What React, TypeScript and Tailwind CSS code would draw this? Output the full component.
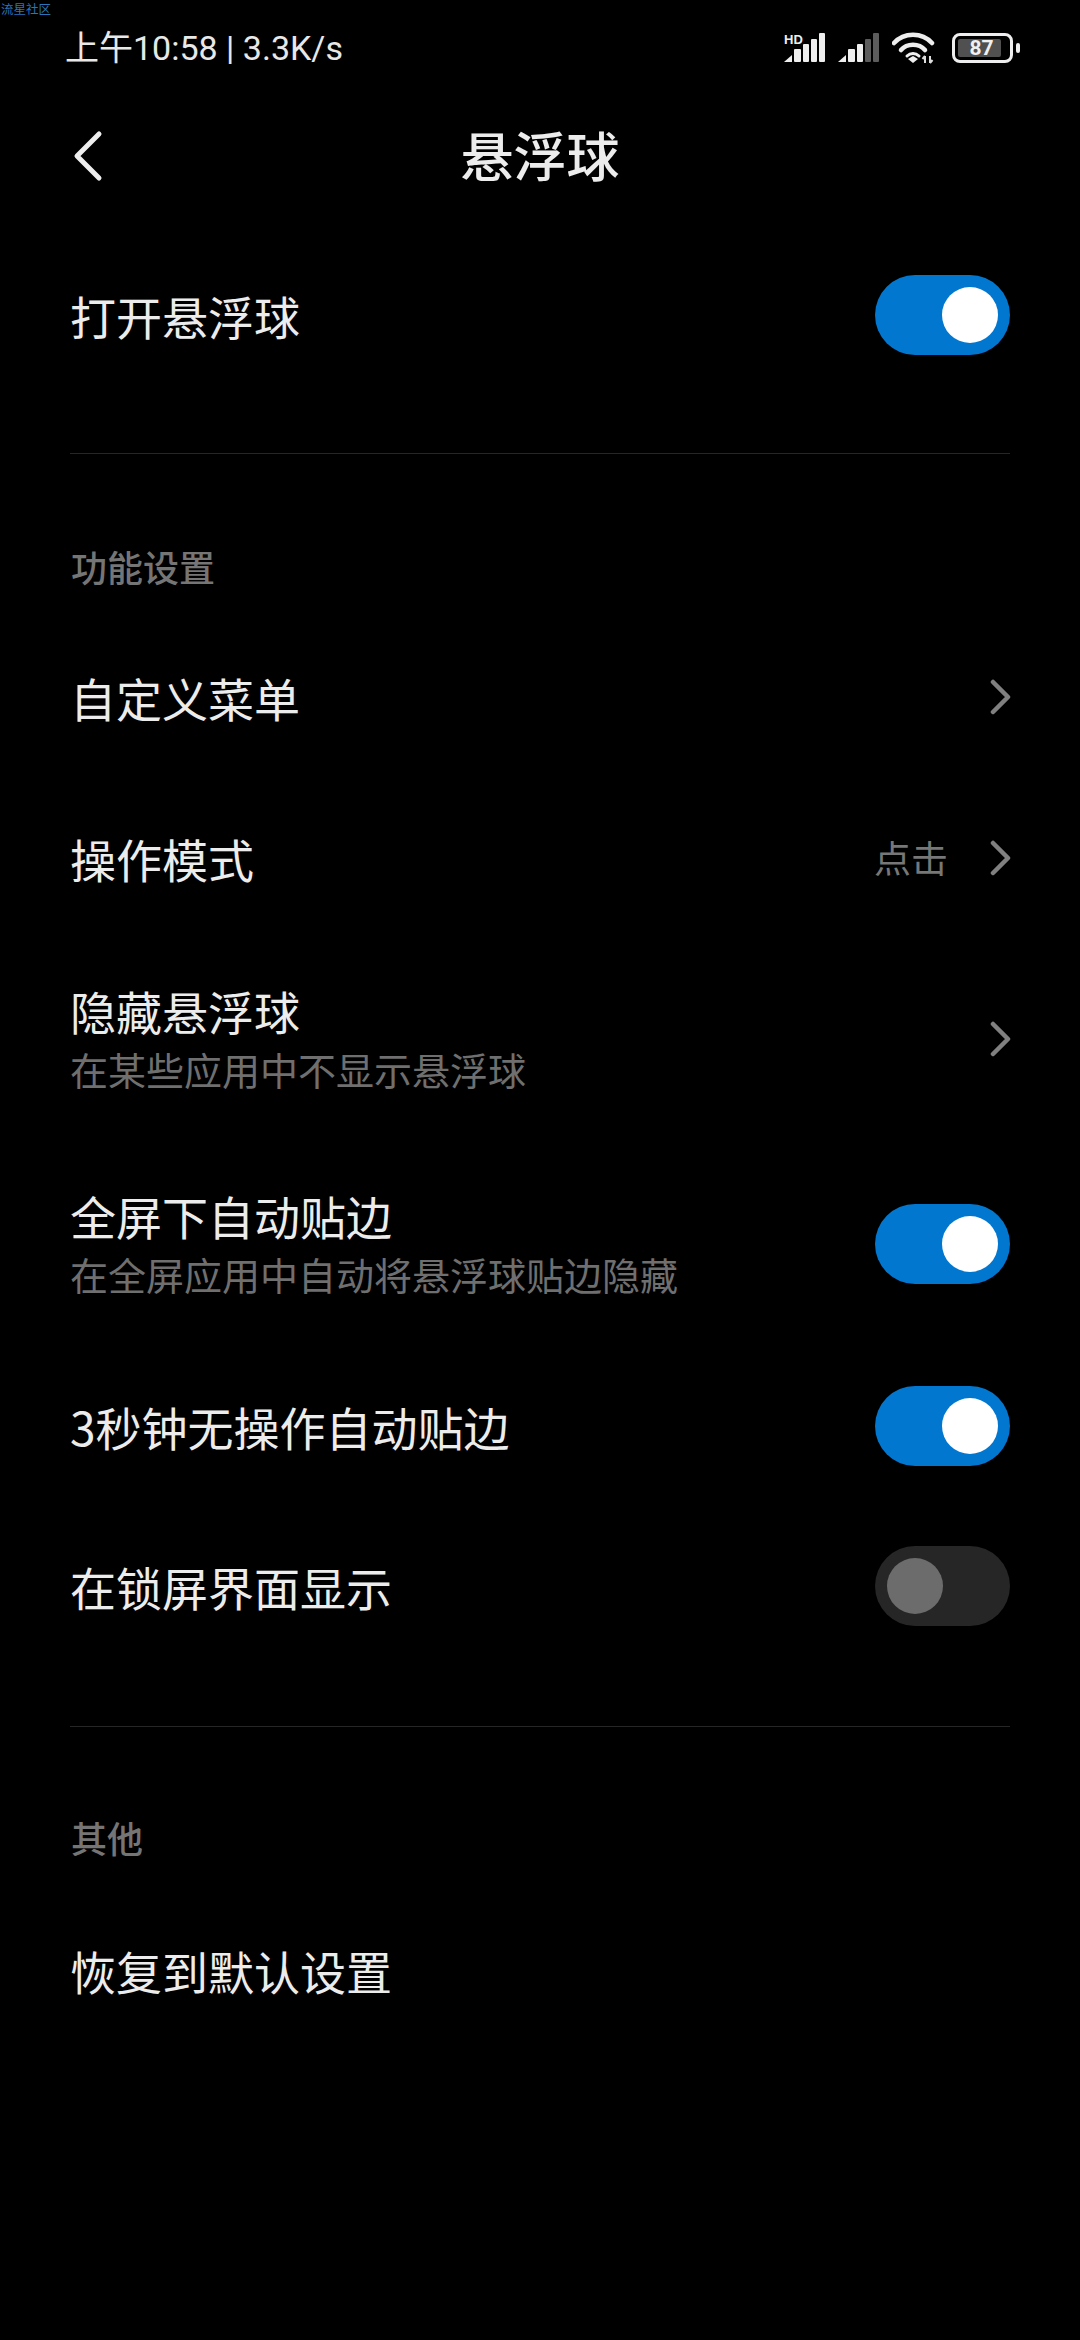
const cjk = "font-['Noto_Sans_CJK_SC','Noto_Sans',sans-serif]";

function Toggle({ on }: { on: boolean }) {
  return (
    <div className={`flex h-[80px] w-[135px] shrink-0 items-center rounded-full px-[12px] ${on ? 'justify-end bg-[#0277d0]' : 'justify-start bg-[#262626]'}`}>
      <div className={`h-[56px] w-[56px] rounded-full ${on ? 'bg-white' : 'bg-[#6c6c6c]'}`} />
    </div>
  );
}

function Chevron() {
  return (
    <svg width="22" height="36" viewBox="0 0 22 36" fill="none" className="shrink-0 translate-x-[2px]">
      <path d="M3 3 L18 18 L3 33" stroke="#808080" strokeWidth="4.5" strokeLinecap="round" strokeLinejoin="round" />
    </svg>
  );
}

function Signal({ dim, hd }: { dim?: boolean; hd?: boolean }) {
  const back = dim ? '#5c5c5c' : '#eeeeee';
  return (
    <svg width="42" height="32" viewBox="0 0 42 32" className="shrink-0">
      <path d="M0 30 L8 23 V30 Z" fill="#eeeeee" />
      <rect x="10" y="17" width="7" height="13" fill="#eeeeee" rx="1" />
      <rect x="19" y="12" width="6" height="18" fill="#eeeeee" rx="1" />
      <rect x="27" y="7" width="6" height="23" fill={back} rx="1" />
      <rect x="35" y="1" width="6" height="29" fill={back} rx="1" />
      {hd && (
        <text x="0" y="12" fontSize="13" fontWeight="700" fill="#eeeeee" fontFamily="Liberation Sans, sans-serif">HD</text>
      )}
    </svg>
  );
}

function Wifi() {
  return (
    <svg width="44" height="32" viewBox="0 0 44 32" fill="none" className="shrink-0">
      <path d="M2 11 C12 0 30 0 40 11" stroke="#eeeeee" strokeWidth="4.5" strokeLinecap="round" />
      <path d="M9 18 C15 11 27 11 33 18" stroke="#eeeeee" strokeWidth="4.5" strokeLinecap="round" />
      <path d="M15 24 C18.5 20.5 23.5 20.5 27 24" stroke="#eeeeee" strokeWidth="3" strokeLinecap="round" />
      <path d="M16 27 L21 24 L26 27 L21 31 Z" fill="#eeeeee" />
      <path d="M33 24 V31 M33 24 L30.5 27 M38 31 V24 M38 31 L40.5 28" stroke="#dddddd" strokeWidth="2" />
    </svg>
  );
}

function Battery() {
  return (
    <div className="ml-[4px] flex items-center gap-[3px]">
      <div className="flex h-[30px] w-[61px] items-center rounded-[8px] border-[3px] border-[#eeeeee] p-[3px]">
        <div className="flex h-full w-[43px] items-center justify-center rounded-[2px] bg-[#505050] pl-[4px]">
          <span className="font-['Roboto',sans-serif] text-[21px] leading-none font-bold text-[#f0f0f0]">87</span>
        </div>
      </div>
      <div className="h-[10px] w-[4px] rounded-full bg-[#eeeeee]" />
    </div>
  );
}

function Row({ title, sub, height, value, chevron, toggle }: { title: string; sub?: string; height: string; value?: string; chevron?: boolean; toggle?: boolean }) {
  return (
    <div className={`flex items-center justify-between px-[70px] ${sub ? 'pt-[2px]' : ''} ${height}`}>
      <div className="min-w-0">
        <div className="text-[46px] leading-[56px] text-[#ececec]">{title}</div>
        {sub && <div className="mt-[4px] text-[38px] leading-[54px] text-[#6f6f6f]">{sub}</div>}
      </div>
      <div className="flex items-center">
        {value && <span className="mr-[40px] text-[37px] text-[#777777]">{value}</span>}
        {chevron && <Chevron />}
        {toggle !== undefined && <Toggle on={toggle} />}
      </div>
    </div>
  );
}

function Divider() {
  return <div className="mx-[70px] h-[1px] bg-[#262626]" />;
}

function SectionLabel({ text, className }: { text: string; className: string }) {
  return (
    <div className={`flex items-center px-[71px] text-[36px] font-medium text-[#757575] ${className}`}>{text}</div>
  );
}

export default function App() {
  return (
    <div className={`relative h-[2340px] w-[1080px] overflow-hidden bg-black ${cjk}`}>
      <span className="absolute top-[1px] left-[1px] text-[12.5px] leading-[16px] text-[#2a74bd]">流星社区</span>

      <div className="flex h-[96px] items-center justify-between pr-[60px] pl-[65px]">
        <span className="font-['Roboto','Noto_Sans_CJK_SC',sans-serif] text-[34px] text-[#e8e8e8]">上午10:58 | 3.3K/s</span>
        <div className="flex items-center gap-[12px]">
          <Signal hd />
          <Signal dim />
          <Wifi />
          <Battery />
        </div>
      </div>

      <div className="relative flex h-[118px] items-center justify-center">
        <svg width="34" height="52" viewBox="0 0 34 52" fill="none" className="absolute top-[34px] left-[72px]">
          <path d="M27 4 L5 26 L27 48" stroke="#eeeeee" strokeWidth="5" strokeLinecap="round" strokeLinejoin="round" />
        </svg>
        <h1 className="text-[53px] font-medium text-[#ececec]">悬浮球</h1>
      </div>

      <Row title="打开悬浮球" toggle height="h-[202px]" />
      <div className="mt-[37px]">
        <Divider />
      </div>

      <SectionLabel text="功能设置" className="h-[163px] pt-[61px]" />
      <Row title="自定义菜单" chevron height="h-[160px]" />
      <Row title="操作模式" value="点击" chevron height="h-[162px]" />
      <Row title="隐藏悬浮球" sub="在某些应用中不显示悬浮球" chevron height="h-[198px]" />
      <Row title="全屏下自动贴边" sub="在全屏应用中自动将悬浮球贴边隐藏" toggle height="h-[212px]" />
      <Row title="3秒钟无操作自动贴边" toggle height="h-[154px]" />
      <Row title="在锁屏界面显示" toggle={false} height="h-[166px]" />

      <div className="mt-[57px]">
        <Divider />
      </div>
      <SectionLabel text="其他" className="h-[163px] pt-[57px]" />
      <Row title="恢复到默认设置" height="h-[160px]" />
    </div>
  );
}
